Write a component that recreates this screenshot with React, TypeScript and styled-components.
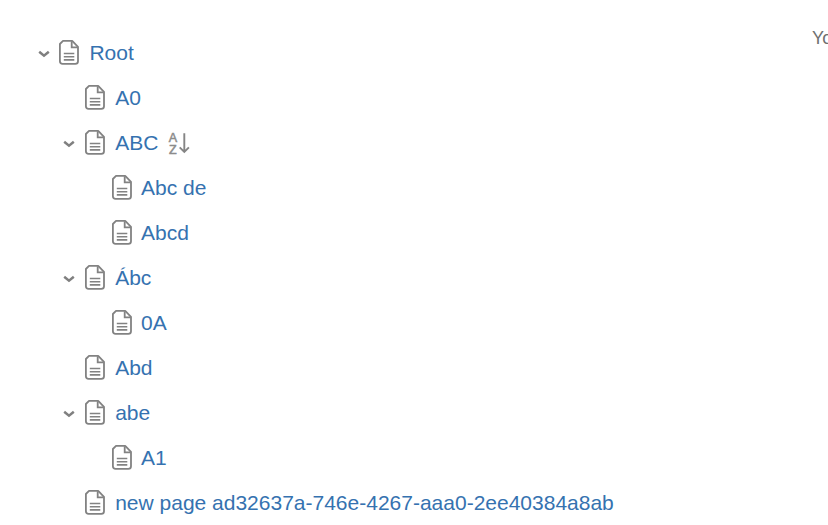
import React from 'react';
import styled, { createGlobalStyle } from 'styled-components';

const GlobalStyle = createGlobalStyle`
  * { box-sizing: border-box; }
  html, body { margin: 0; background: #fff; overflow: hidden; }
`;
const Page = styled.main`
  width: 828px; height: 525px; overflow: hidden;
  display: flex; justify-content: space-between;
  font-family: "Liberation Sans", Arial, sans-serif;
`;
const Tree = styled.ul`
  list-style: none; margin: 0; padding: 30px 0 0 34px;
`;
const Row = styled.li<{ $depth: number }>`
  display: flex; align-items: center; height: 45px;
  padding-left: ${p => p.$depth * 25.7}px;
`;
const Toggle = styled.span<{ $depth: number }>`
  width: 19.6px; height: 20px; display: flex; align-items: center; justify-content: center;
  margin-right: ${p => 4 + p.$depth * 0.9}px; padding-top: 3px;
`;
const Title = styled.a<{ $depth: number }>`
  font-size: 21px; line-height: 30px; color: #3572b0; white-space: nowrap;
  margin-left: ${p => 9.8 - p.$depth * 0.8}px;
`;
const SortMark = styled.span`
  display: flex; margin-left: 9px;
`;
const Aside = styled.aside`
  width: 16px; padding-top: 27px; font-size: 18px; line-height: 22px; color: #707070; white-space: nowrap; overflow: hidden;
`;

const PageIcon = () => (
  <svg width="22" height="27" viewBox="0 0 22 27" fill="none" stroke="#828282" strokeWidth="1.8">
    <path d="M5 1.9H14.2L20 7.9V22.2Q20 24.9 17.3 24.9H4.6Q1.9 24.9 1.9 22.2V5Z" strokeLinejoin="round" />
    <path d="M13.7 2.3V8.4H19.6" />
    <path d="M5.8 14.5H16.3M5.8 17.7H16.3M5.8 20.9H16.3" strokeWidth="1.6" />
  </svg>
);
const Chevron = () => (
  <svg width="12" height="8" viewBox="0 0 12 8" fill="none" stroke="#808080" strokeWidth="2.5">
    <path d="M1.2 1.8L6 5.7L10.8 1.8" />
  </svg>
);
const SortIcon = () => (
  <svg width="24" height="26" viewBox="0 0 24 26" fill="none" stroke="#858585">
    <g fill="#8c8c8c" stroke="#8c8c8c" strokeWidth="0.5" fontSize="12.6" textAnchor="middle">
      <text x="5.9" y="11.8">A</text>
      <text x="5.9" y="23.8">Z</text>
    </g>
    <path d="M17.3 3.3V21.8M12.7 17.4L17.3 22L21.9 17.4" strokeWidth="1.9" />
  </svg>
);

type Item = { title: string; depth: number; open?: boolean; sorted?: boolean };
const items: Item[] = [
  { title: 'Root', depth: 0, open: true },
  { title: 'A0', depth: 1 },
  { title: 'ABC', depth: 1, open: true, sorted: true },
  { title: 'Abc de', depth: 2 },
  { title: 'Abcd', depth: 2 },
  { title: 'Ábc', depth: 1, open: true },
  { title: '0A', depth: 2 },
  { title: 'Abd', depth: 1 },
  { title: 'abe', depth: 1, open: true },
  { title: 'A1', depth: 2 },
  { title: 'new page ad32637a-746e-4267-aaa0-2ee40384a8ab', depth: 1 },
];

export default function App() {
  return (
    <Page>
      <GlobalStyle />
      <Tree>
        {items.map(i => (
          <Row key={i.title} $depth={i.depth}>
            <Toggle $depth={i.depth}>{i.open && <Chevron />}</Toggle>
            <PageIcon />
            <Title $depth={i.depth}>{i.title}</Title>
            {i.sorted && <SortMark><SortIcon /></SortMark>}
          </Row>
        ))}
      </Tree>
      <Aside>Yo</Aside>
    </Page>
  );
}
